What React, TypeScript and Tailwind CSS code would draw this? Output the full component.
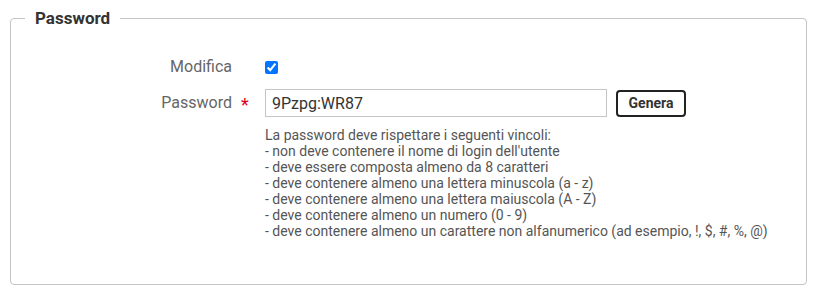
import React from "react";

export default function App() {
  const rules = [
    "La password deve rispettare i seguenti vincoli:",
    "- non deve contenere il nome di login dell'utente",
    "- deve essere composta almeno da 8 caratteri",
    "- deve contenere almeno una lettera minuscola (a - z)",
    "- deve contenere almeno una lettera maiuscola (A - Z)",
    "- deve contenere almeno un numero (0 - 9)",
    "- deve contenere almeno un carattere non alfanumerico (ad esempio, !, $, #, %, @)",
  ];
  return (
    <div
      className="w-[817px] h-[294px] bg-white px-[10px] pt-[7px] pb-[9px]"
      style={{ fontFamily: "Roboto, 'Liberation Sans', sans-serif" }}
    >
      <fieldset className="h-[278px] border border-[#c4c4c4] rounded-[4px] m-0 p-0">
        <legend className="ml-[14px] px-[10px] text-[17px] leading-[22px] font-bold text-[#333]">
          Password
        </legend>
        <div className="flex flex-col pt-[24px] gap-[8px]">
          <div className="flex items-center h-[28px]">
            <div className="w-[221px] text-right text-[16px] text-[#666]">Modifica</div>
            <div className="w-[33px]" />
            <input type="checkbox" defaultChecked className="m-0 w-[13px] h-[13px] accent-[#0075ff]" />
          </div>
          <div className="flex items-center h-[28px]">
            <div className="w-[221px] text-right text-[16px] text-[#666]">Password</div>
            <div className="w-[33px] pl-[9px] text-[18px] text-[#e0001b] leading-none pt-[4px]">*</div>
            <input
              type="text"
              defaultValue="9Pzpg:WR87"
              className="w-[342px] h-[28px] border border-[#c4c4c4] px-[6px] text-[16px] text-[#333] outline-none"
            />
            <button className="ml-[9px] w-[70px] h-[27px] border-2 border-[#222] rounded-[4px] text-[14px] font-bold text-[#333] bg-white">
              Genera
            </button>
          </div>
        </div>
        <div className="ml-[254px] mt-[10px] text-[14px] leading-[16px] text-[#555]">
          {rules.map((r) => (
            <div key={r}>{r}</div>
          ))}
        </div>
      </fieldset>
    </div>
  );
}
